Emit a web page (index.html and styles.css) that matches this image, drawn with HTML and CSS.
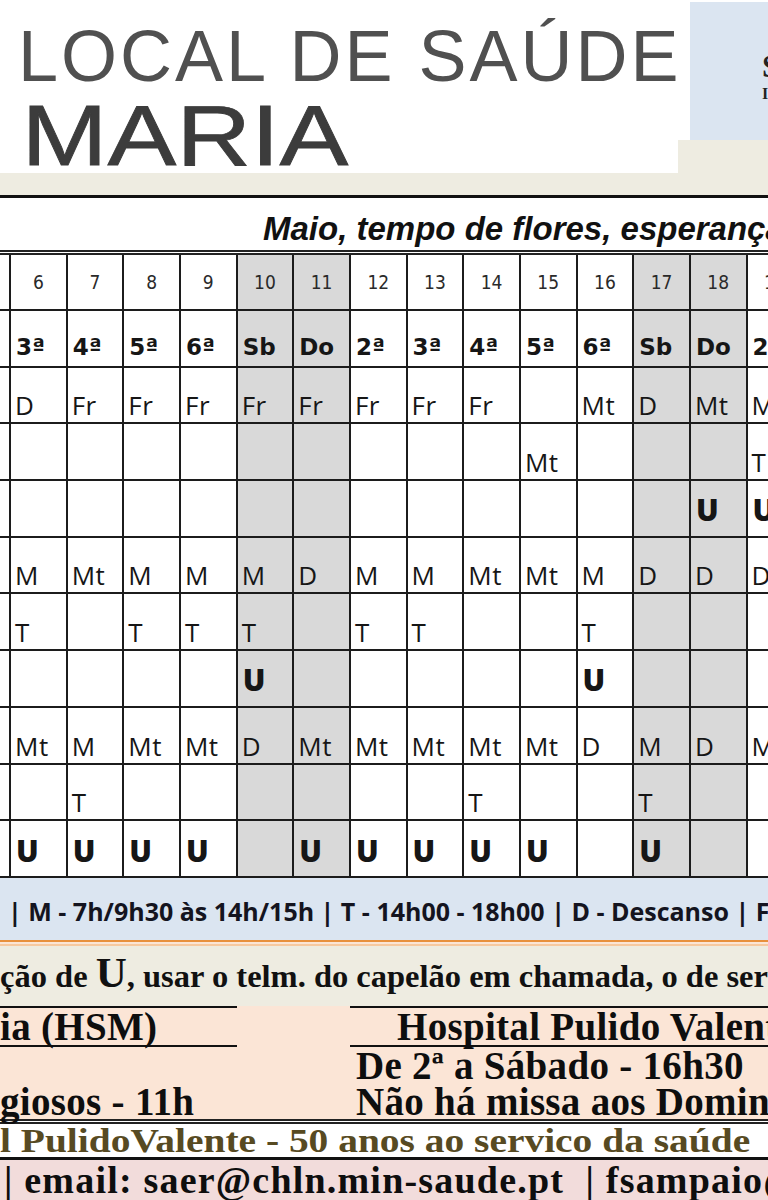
FILE: index.html
```html
<!DOCTYPE html>
<html lang="pt">
<head>
<meta charset="utf-8">
<title>Escala - Maio</title>
<link rel="stylesheet" href="styles.css">
</head>
<body>
<div class="sheet">
  <header class="header">
    <div class="logo">
      <div class="logo-top">LOCAL DE SAÚDE</div>
      <div class="logo-main">MARIA</div>
    </div>
    <div class="header-side">
      <div class="side-top">
        <div class="side-gap"></div>
        <div class="side-box"><span class="side-l1">Serviço</span><span class="side-l2">Igreja</span></div>
      </div>
    </div>
  </header>
  <div class="title">Maio, tempo de flores, esperança e vida</div>
  <div class="double-line"></div>

  <div class="grid">
    <!-- dates -->
    <div class="c"></div>
    <div class="c date">6</div><div class="c date">7</div><div class="c date">8</div><div class="c date">9</div>
    <div class="c date we">10</div><div class="c date we">11</div>
    <div class="c date">12</div><div class="c date">13</div><div class="c date">14</div><div class="c date">15</div><div class="c date">16</div>
    <div class="c date we">17</div><div class="c date we">18</div>
    <div class="c date">19</div>
    <!-- days -->
    <div class="c"></div>
    <div class="c day">3ª</div><div class="c day">4ª</div><div class="c day">5ª</div><div class="c day">6ª</div>
    <div class="c day we">Sb</div><div class="c day we">Do</div>
    <div class="c day">2ª</div><div class="c day">3ª</div><div class="c day">4ª</div><div class="c day">5ª</div><div class="c day">6ª</div>
    <div class="c day we">Sb</div><div class="c day we">Do</div>
    <div class="c day">2ª</div>
    <!-- r3 -->
    <div class="c"></div>
    <div class="c t">D</div><div class="c t">Fr</div><div class="c t">Fr</div><div class="c t">Fr</div>
    <div class="c t we">Fr</div><div class="c t we">Fr</div>
    <div class="c t">Fr</div><div class="c t">Fr</div><div class="c t">Fr</div><div class="c t"></div><div class="c t">Mt</div>
    <div class="c t we">D</div><div class="c t we">Mt</div>
    <div class="c t">M</div>
    <!-- r4 -->
    <div class="c"></div>
    <div class="c t"></div><div class="c t"></div><div class="c t"></div><div class="c t"></div>
    <div class="c t we"></div><div class="c t we"></div>
    <div class="c t"></div><div class="c t"></div><div class="c t"></div><div class="c t">Mt</div><div class="c t"></div>
    <div class="c t we"></div><div class="c t we"></div>
    <div class="c t">T</div>
    <!-- r5 -->
    <div class="c"></div>
    <div class="c u"></div><div class="c u"></div><div class="c u"></div><div class="c u"></div>
    <div class="c u we"></div><div class="c u we"></div>
    <div class="c u"></div><div class="c u"></div><div class="c u"></div><div class="c u"></div><div class="c u"></div>
    <div class="c u we"></div><div class="c u we">U</div>
    <div class="c u">U</div>
    <!-- r6 -->
    <div class="c"></div>
    <div class="c t">M</div><div class="c t">Mt</div><div class="c t">M</div><div class="c t">M</div>
    <div class="c t we">M</div><div class="c t we">D</div>
    <div class="c t">M</div><div class="c t">M</div><div class="c t">Mt</div><div class="c t">Mt</div><div class="c t">M</div>
    <div class="c t we">D</div><div class="c t we">D</div>
    <div class="c t">D</div>
    <!-- r7 -->
    <div class="c"></div>
    <div class="c t">T</div><div class="c t"></div><div class="c t">T</div><div class="c t">T</div>
    <div class="c t we">T</div><div class="c t we"></div>
    <div class="c t">T</div><div class="c t">T</div><div class="c t"></div><div class="c t"></div><div class="c t">T</div>
    <div class="c t we"></div><div class="c t we"></div>
    <div class="c t"></div>
    <!-- r8 -->
    <div class="c"></div>
    <div class="c u"></div><div class="c u"></div><div class="c u"></div><div class="c u"></div>
    <div class="c u we">U</div><div class="c u we"></div>
    <div class="c u"></div><div class="c u"></div><div class="c u"></div><div class="c u"></div><div class="c u">U</div>
    <div class="c u we"></div><div class="c u we"></div>
    <div class="c u"></div>
    <!-- r9 -->
    <div class="c"></div>
    <div class="c t">Mt</div><div class="c t">M</div><div class="c t">Mt</div><div class="c t">Mt</div>
    <div class="c t we">D</div><div class="c t we">Mt</div>
    <div class="c t">Mt</div><div class="c t">Mt</div><div class="c t">Mt</div><div class="c t">Mt</div><div class="c t">D</div>
    <div class="c t we">M</div><div class="c t we">D</div>
    <div class="c t">M</div>
    <!-- r10 -->
    <div class="c"></div>
    <div class="c t"></div><div class="c t">T</div><div class="c t"></div><div class="c t"></div>
    <div class="c t we"></div><div class="c t we"></div>
    <div class="c t"></div><div class="c t"></div><div class="c t">T</div><div class="c t"></div><div class="c t"></div>
    <div class="c t we">T</div><div class="c t we"></div>
    <div class="c t"></div>
    <!-- r11 -->
    <div class="c"></div>
    <div class="c u">U</div><div class="c u">U</div><div class="c u">U</div><div class="c u">U</div>
    <div class="c u we"></div><div class="c u we">U</div>
    <div class="c u">U</div><div class="c u">U</div><div class="c u">U</div><div class="c u">U</div><div class="c u"></div>
    <div class="c u we">U</div><div class="c u we"></div>
    <div class="c u"></div>
  </div>

  <div class="legend">| M - 7h/9h30 às 14h/15h | T - 14h00 - 18h00 | D - Descanso | Fr - Férias</div>
  <div class="orange-line"></div>
  <div class="note">ção de <span class="big-u">U</span>, usar o telm. do capelão em chamada, o de serviço</div>

  <div class="masses">
    <div class="m-cell m-left m-head">ia (HSM)</div>
    <div class="m-cell m-mid"></div>
    <div class="m-cell m-right m-head m-hosp">Hospital Pulido Valente</div>

    <div class="m-cell m-left m-row2"></div>
    <div class="m-cell m-mid m-row2"></div>
    <div class="m-cell m-right m-row2">De 2ª a Sábado - 16h30</div>

    <div class="m-cell m-left m-row3">giosos - 11h</div>
    <div class="m-cell m-mid m-row3"></div>
    <div class="m-cell m-right m-row3">Não há missa aos Domingos</div>
  </div>
  <div class="double-line dark"></div>
  <div class="anniv"><span class="anniv-text">l PulidoValente - 50 anos ao servico da saúde</span></div>
  <div class="contact">| email: saer@chln.min-saude.pt&nbsp; | fsampaio@chln.min-saude.pt</div>
</div>
</body>
</html>
```
FILE: styles.css
```css
html, body {
  margin: 0;
  padding: 0;
  overflow: hidden;
  background: #ffffff;
}
body {
  width: 768px;
  height: 1200px;
}
.sheet {
  width: 820px;
}

/* header */
.header {
  display: grid;
  grid-template-columns: 678px 1fr;
  height: 195px;
  background: #eeece1;
  border-bottom: 3px solid #111111;
}
.logo {
  background: #ffffff;
  height: 173px;
  padding-left: 18px;
  font-family: "Liberation Sans", Arial, sans-serif;
  color: #505050;
  white-space: nowrap;
}
.logo-top {
  padding-top: 20px;
  font-size: 72px;
  line-height: 72px;
  letter-spacing: 3px;
}
.logo-main {
  font-size: 86px;
  line-height: 86px;
  color: #3c3c3c;
  -webkit-text-stroke: 0.8px #3c3c3c;
  transform: scaleX(1.2);
  transform-origin: left center;
  padding-left: 3px;
}
.side-top {
  display: flex;
  height: 140px;
  background: #ffffff;
}
.side-gap {
  width: 12px;
}
.side-box {
  flex: 1;
  margin-top: 2px;
  background: #dbe5f1;
  padding: 48px 0 0 72px;
  font-family: "Liberation Serif", "Times New Roman", serif;
  font-weight: bold;
  color: #222222;
  white-space: nowrap;
  overflow: hidden;
}
.side-l1 {
  display: block;
  font-size: 32px;
  line-height: 32px;
}
.side-l2 {
  display: block;
  font-size: 16px;
  line-height: 16px;
  margin-top: 4px;
}

/* title */
.title {
  box-sizing: border-box;
  height: 52px;
  padding: 14px 0 0 263px;
  font-family: "Liberation Sans", Arial, sans-serif;
  font-weight: bold;
  font-style: italic;
  font-size: 33px;
  line-height: 33px;
  color: #111111;
  white-space: nowrap;
  overflow: hidden;
}
.double-line {
  height: 1px;
  border-top: 2px solid #222222;
  border-bottom: 2px solid #222222;
  background: #ffffff;
}

/* grid */
.grid {
  display: grid;
  grid-template-columns: 9px repeat(14, 54.67px);
  grid-template-rows: 54px repeat(10, 54.7px);
  gap: 2px;
  padding-bottom: 2px;
  background: #1c1c1c;
  width: max-content;
}
.c {
  background: #ffffff;
  overflow: hidden;
  box-sizing: border-box;
  display: flex;
  color: #161616;
}
.c.we {
  background: #d9d9d9;
}
.date {
  align-items: center;
  justify-content: center;
  font-family: "DejaVu Sans Condensed", "DejaVu Sans", sans-serif;
  font-stretch: condensed;
  font-size: 19px;
  line-height: 1;
  color: #2a2a2a;
}
.day {
  align-items: flex-end;
  padding: 0 0 7px 5px;
  font-family: "DejaVu Sans", Verdana, sans-serif;
  font-weight: bold;
  font-size: 23px;
  line-height: 1;
}
.t {
  align-items: flex-end;
  padding: 0 0 4px 4px;
  font-family: "Open Sans", "Liberation Sans", sans-serif;
  font-size: 26px;
  line-height: 1;
  letter-spacing: 0.5px;
}
.u {
  align-items: center;
  padding: 4px 0 0 5px;
  font-family: "Open Sans", "Liberation Sans", sans-serif;
  font-weight: 800;
  font-size: 30px;
  line-height: 1;
}

/* legend */
.legend {
  box-sizing: border-box;
  height: 62px;
  padding: 4px 0 0 8px;
  background: #dbe5f1;
  font-family: "Open Sans", "Liberation Sans", sans-serif;
  font-weight: bold;
  font-size: 25px;
  line-height: 58px;
  color: #141420;
  white-space: nowrap;
}
.orange-line {
  height: 2px;
  border-top: 2px solid #e8903c;
  border-bottom: 2px solid #f6c9a0;
  background: #fbe5d5;
}
.note {
  height: 60px;
  background: #eeece1;
  font-family: "Liberation Serif", "Times New Roman", serif;
  font-weight: bold;
  font-size: 32.5px;
  line-height: 60px;
  color: #111111;
  white-space: nowrap;
}
.big-u {
  font-size: 43px;
  line-height: 1;
}

/* masses */
.masses {
  display: grid;
  grid-template-columns: 237px 113px 1fr;
  background: #fbe5d6;
  font-family: "Liberation Serif", "Times New Roman", serif;
  font-weight: bold;
  font-size: 39px;
  letter-spacing: 0.3px;
  color: #0e0e0e;
  white-space: nowrap;
}
.m-cell {
  height: 37px;
  line-height: 37px;
}
.m-mid {
  height: 37px;
  border-top: 2px solid transparent;
  border-bottom: 2px solid transparent;
}
.m-mid.m-row2,
.m-mid.m-row3 {
  border: none;
}
.m-head.m-left,
.m-head.m-right {
  border-top: 2px solid #111111;
  border-bottom: 2px solid #111111;
}
.m-hosp {
  padding-left: 47px;
}
.m-right.m-row2,
.m-right.m-row3 {
  padding-left: 6px;
}
.m-row3 {
  height: 35px;
  line-height: 35px;
}
.anniv {
  height: 33px;
  background: #ffffff;
  border-bottom: 3px solid #111111;
  font-family: "Liberation Serif", "Times New Roman", serif;
  font-weight: bold;
  font-size: 34px;
  line-height: 33px;
  color: #574a22;
  white-space: nowrap;
}
.anniv-text {
  display: inline-block;
  transform: scaleX(1.16);
  transform-origin: left center;
}
.contact {
  height: 40px;
  background: #f2dcdb;
  font-family: "Liberation Serif", "Times New Roman", serif;
  font-weight: bold;
  font-size: 38px;
  line-height: 40px;
  letter-spacing: 1.2px;
  color: #0e0e0e;
  white-space: nowrap;
  padding-left: 4px;
}
```
